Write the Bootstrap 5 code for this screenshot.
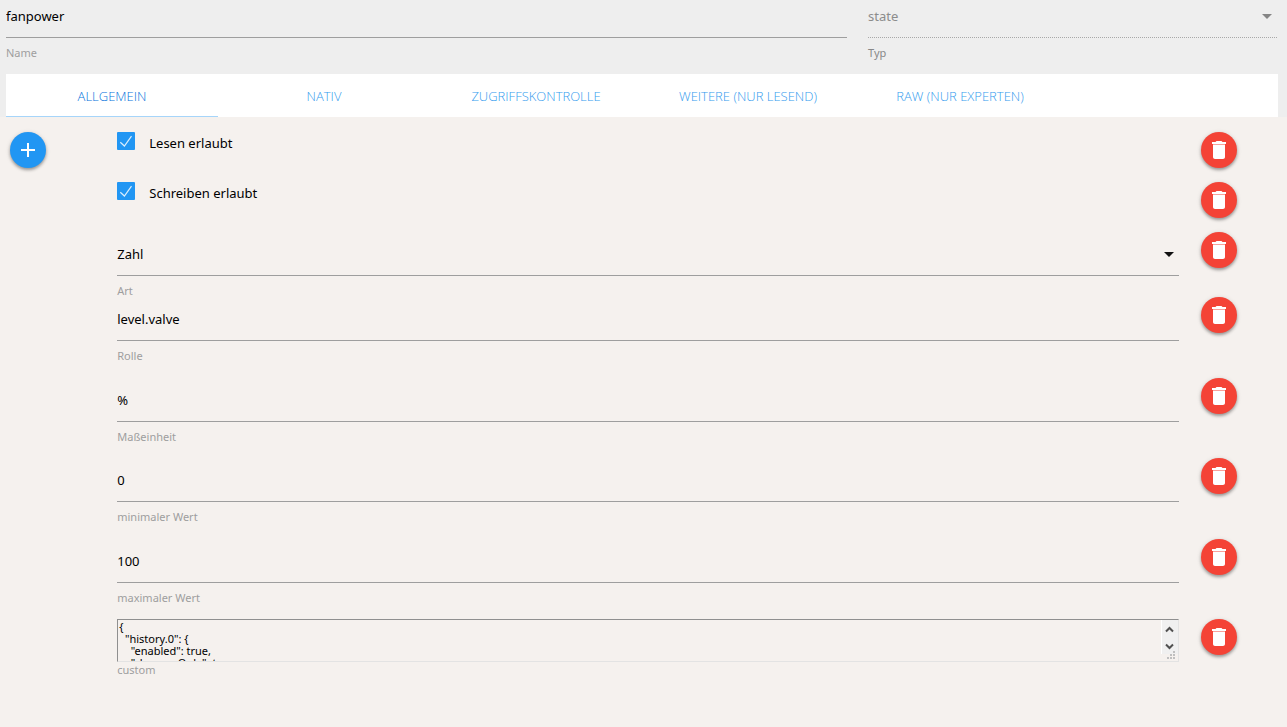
<!DOCTYPE html>
<html lang="de">
<head>
<meta charset="utf-8">
<meta name="viewport" content="width=device-width, initial-scale=1">
<title>fanpower</title>
<link href="https://cdn.jsdelivr.net/npm/bootstrap@5.3.0/dist/css/bootstrap.min.css" rel="stylesheet">
<style>
  body { background: #f5f1ee; color: #000; font: 13px/22px "Noto Sans", "Open Sans", sans-serif; }
  .object-head { background: #eee; }
  .name-cell { padding: 0 11px 0 6px; }
  .type-cell { padding: 0 10px; }
  .add-cell { padding-left: 10px; }
  .value-cell { padding: 0 1px 0 10px; }
  .delete-cell { padding-left: 21px; }

  .line-field { display: block; width: 100%; height: 44px; padding: 0; border: 0; border-bottom: 1px solid #9e9e9e; border-radius: 0; background: transparent; color: #000; font-size: 13px; line-height: 22px; outline: 0; appearance: none; }
  .object-head .line-field { height: 38px; padding-bottom: 5px; }
  .line-field:disabled { border-bottom: 1px dotted #a8a8a8; color: #8c8c8c; opacity: 1; }
  .select-wrap::after { content: ""; position: absolute; right: 5px; top: 20px; border: 5px solid transparent; border-top-color: #111; border-bottom: 0; }
  .object-head .select-wrap::after { top: 14px; border-top-color: #858585; }
  .field-label { display: block; margin-top: 9px; color: #9e9e9e; font-size: 11px; line-height: 12px; }
  .type-cell .field-label { color: #888; }

  .tab-strip { margin: 15px 9px 0 6px; background: #fff; }
  .tab-strip .nav-item { width: 16.6667%; }
  .tab-strip .nav-link { padding: 0; height: 43px; border-bottom: 1px solid transparent; border-radius: 0; color: #359cee; font: 300 13px/45px "Open Sans", "Noto Sans", sans-serif; text-align: center; text-transform: uppercase; white-space: nowrap; }
  .tab-strip .nav-link.active { border-bottom-color: #a6d5fa; color: #0673dc; }

  .attributes { padding-top: 15px; }
  .check-row { height: 50px; }
  .check-text { margin-left: 14px; }
  .wide-row { margin-bottom: 15px; }
  .role-row { margin-bottom: 16px; }
  .tick { width: 18px; height: 18px; margin: 0; border: 0; border-radius: 1px; appearance: none; background: #2196f3 url("data:image/svg+xml,%3Csvg xmlns='http://www.w3.org/2000/svg' viewBox='0 0 18 18'%3E%3Cpath d='M3.3 10.2 7.4 14 14.5 4.2' fill='none' stroke='%23d9edfd' stroke-width='1.2'/%3E%3C/svg%3E"); }

  .round-btn { width: 36px; height: 36px; padding: 6px; border: 0; border-radius: 50%; box-shadow: 0 2px 3px rgba(0,0,0,.3), 0 1px 5px rgba(0,0,0,.14); }
  .round-btn svg { display: block; fill: #fff; }
  .round-add { background: #2196f3; }
  .round-delete { background: #f44336; }

  .json-box { display: block; width: 100%; height: 43px; padding: 1px; border: 1px solid; border-color: #8f8f8f #e3e3e3 #e3e3e3 #8f8f8f; background: transparent; color: #000; font-size: 11px; line-height: 12px; white-space: pre; overflow: hidden; resize: none; outline: 0; }
  .scroller { top: 1px; right: 1px; }
  .custom-label { margin-top: 2px; }
</style>
</head>
<body>
<svg class="d-none" xmlns="http://www.w3.org/2000/svg">
  <symbol id="trash" viewBox="0 0 24 24"><path d="M6 19c0 1.100.900 2 2 2h8c1.100 0 2-.900 2-2V7H6v12zM19 4h-3.500l-1-1h-5l-1 1H5v1.900h14V4z"/><path fill-opacity=".5" d="M6 5.900h12V7H6z"/></symbol>
</svg>

<header class="object-head">
  <div class="row g-0">
    <div class="col-8 name-cell">
      <input class="line-field" id="name" type="text" value="fanpower">
      <label class="field-label" for="name">Name</label>
    </div>
    <div class="col-4 type-cell">
      <div class="select-wrap position-relative">
        <select class="line-field" id="type" disabled><option>state</option></select>
      </div>
      <label class="field-label" for="type">Typ</label>
    </div>
  </div>
  <ul class="nav tab-strip">
    <li class="nav-item"><a class="nav-link active" href="#general">Allgemein</a></li>
    <li class="nav-item"><a class="nav-link" href="#native">Nativ</a></li>
    <li class="nav-item"><a class="nav-link" href="#access">Zugriffskontrolle</a></li>
    <li class="nav-item"><a class="nav-link" href="#more">Weitere (nur lesend)</a></li>
    <li class="nav-item"><a class="nav-link" href="#raw">Raw (nur Experten)</a></li>
  </ul>
</header>

<main class="attributes" id="general">
  <div class="row g-0 check-row">
    <div class="col-1 add-cell">
      <button class="round-btn round-add" type="button" aria-label="Hinzufügen"><svg width="24" height="24" viewBox="0 0 24 24"><path d="M19 13h-6v6h-2v-6H5v-2h6V5h2v6h6v2z"/></svg></button>
    </div>
    <div class="col-10 value-cell d-flex align-items-start">
      <input class="tick" type="checkbox" id="read" checked><label class="check-text" for="read">Lesen erlaubt</label>
    </div>
    <div class="col-1 delete-cell"><button class="round-btn round-delete" type="button" aria-label="Löschen"><svg width="24" height="24"><use href="#trash"/></svg></button></div>
  </div>
  <div class="row g-0 check-row">
    <div class="col-10 offset-1 value-cell d-flex align-items-start">
      <input class="tick" type="checkbox" id="write" checked><label class="check-text" for="write">Schreiben erlaubt</label>
    </div>
    <div class="col-1 delete-cell"><button class="round-btn round-delete" type="button" aria-label="Löschen"><svg width="24" height="24"><use href="#trash"/></svg></button></div>
  </div>
  <div class="row g-0">
    <div class="col-10 offset-1 value-cell">
      <div class="select-wrap position-relative"><select class="line-field" id="kind"><option>Zahl</option></select></div>
      <label class="field-label" for="kind">Art</label>
    </div>
    <div class="col-1 delete-cell"><button class="round-btn round-delete" type="button" aria-label="Löschen"><svg width="24" height="24"><use href="#trash"/></svg></button></div>
  </div>
  <div class="row g-0 role-row">
    <div class="col-10 offset-1 value-cell">
      <input class="line-field" id="role" type="text" value="level.valve">
      <label class="field-label" for="role">Rolle</label>
    </div>
    <div class="col-1 delete-cell"><button class="round-btn round-delete" type="button" aria-label="Löschen"><svg width="24" height="24"><use href="#trash"/></svg></button></div>
  </div>
  <div class="row g-0 wide-row">
    <div class="col-10 offset-1 value-cell">
      <input class="line-field" id="unit" type="text" value="%">
      <label class="field-label" for="unit">Maßeinheit</label>
    </div>
    <div class="col-1 delete-cell"><button class="round-btn round-delete" type="button" aria-label="Löschen"><svg width="24" height="24"><use href="#trash"/></svg></button></div>
  </div>
  <div class="row g-0 role-row">
    <div class="col-10 offset-1 value-cell">
      <input class="line-field" id="min" type="text" value="0">
      <label class="field-label" for="min">minimaler Wert</label>
    </div>
    <div class="col-1 delete-cell"><button class="round-btn round-delete" type="button" aria-label="Löschen"><svg width="24" height="24"><use href="#trash"/></svg></button></div>
  </div>
  <div class="row g-0 wide-row">
    <div class="col-10 offset-1 value-cell">
      <input class="line-field" id="max" type="text" value="100">
      <label class="field-label" for="max">maximaler Wert</label>
    </div>
    <div class="col-1 delete-cell"><button class="round-btn round-delete" type="button" aria-label="Löschen"><svg width="24" height="24"><use href="#trash"/></svg></button></div>
  </div>
  <div class="row g-0">
    <div class="col-10 offset-1 value-cell">
      <div class="position-relative">
        <textarea class="json-box" id="custom" spellcheck="false">{
  "history.0": {
    "enabled": true,
    "changesOnly": true
  }
}</textarea>
        <svg class="scroller position-absolute" width="17" height="41" viewBox="0 0 17 41" aria-hidden="true">
          <path fill="#f0f0f0" d="M0 0h17v34H0z"/><path fill="#fff" d="M0 0h1v34H0z"/>
          <path fill="none" stroke="#505050" stroke-width="2" d="M5 11.5 8.500 8l3.500 3.500M5 24.500 8.500 28l3.500-3.500"/>
          <path fill="#bfbfbf" d="M12 31h2v2h-2zM9 34h2v2H9zM12 34h2v2h-2zM6 37h2v2H6zM9 37h2v2H9zM12 37h2v2h-2z"/>
        </svg>
      </div>
      <label class="field-label custom-label" for="custom">custom</label>
    </div>
    <div class="col-1 delete-cell"><button class="round-btn round-delete" type="button" aria-label="Löschen"><svg width="24" height="24"><use href="#trash"/></svg></button></div>
  </div>
</main>
<script src="https://cdn.jsdelivr.net/npm/bootstrap@5.3.0/dist/js/bootstrap.bundle.min.js"></script>
</body>
</html>
